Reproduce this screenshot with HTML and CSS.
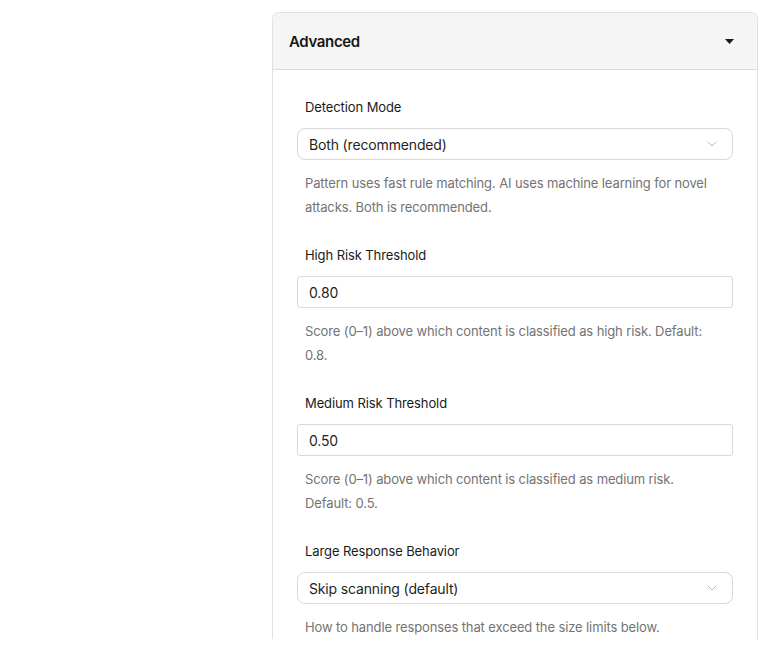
FILE: index.html
```html
<!DOCTYPE html>
<html>
<head>
<meta charset="utf-8">
<link rel="stylesheet" href="styles.css">
</head>
<body>
<div class="page">
  <section class="card">
    <header class="card-header">
      <span class="card-title">Advanced</span>
      <svg class="caret" width="9" height="5" viewBox="0 0 9 5"><path d="M0 0 H9 L4.5 5 Z" fill="#1a1a1a"/></svg>
    </header>
    <div class="card-body">
      <div class="field">
        <div class="label">Detection Mode</div>
        <div class="select">
          <span>Both (recommended)</span>
          <svg class="chev" width="10" height="6" viewBox="0 0 10 6"><path d="M0.5 0.5 L5 5 L9.5 0.5" fill="none" stroke="#b8b8b8" stroke-width="1"/></svg>
        </div>
        <p class="help">Pattern uses fast rule matching. AI uses machine learning for novel attacks. Both is recommended.</p>
      </div>
      <div class="field">
        <div class="label">High Risk Threshold</div>
        <div class="input">0.80</div>
        <p class="help">Score (0–1) above which content is classified as high risk. Default: 0.8.</p>
      </div>
      <div class="field">
        <div class="label">Medium Risk Threshold</div>
        <div class="input">0.50</div>
        <p class="help">Score (0–1) above which content is classified as medium risk. Default: 0.5.</p>
      </div>
      <div class="field">
        <div class="label">Large Response Behavior</div>
        <div class="select">
          <span>Skip scanning (default)</span>
          <svg class="chev" width="10" height="6" viewBox="0 0 10 6"><path d="M0.5 0.5 L5 5 L9.5 0.5" fill="none" stroke="#b8b8b8" stroke-width="1"/></svg>
        </div>
        <p class="help">How to handle responses that exceed the size limits below.</p>
      </div>
    </div>
  </section>
</div>
</body>
</html>
```

FILE: styles.css
```css
html, body {
  margin: 0;
  padding: 0;
  background: #ffffff;
  font-family: Inter, "Noto Sans", "Liberation Sans", sans-serif;
  color: #1f1f1f;
}

.page {
  padding: 12px 0 0 272px;
  height: 637px;
  overflow: hidden;
}

.card {
  width: 486px;
  box-sizing: border-box;
  border: 1px solid #e1e1e1;
  border-bottom: none;
  border-radius: 7px 7px 0 0;
  background: #fff;
}

.card-header {
  height: 56px;
  background: #f5f5f5;
  border-bottom: 1px solid #dcdcdc;
  border-radius: 7px 7px 0 0;
  display: flex;
  align-items: center;
  justify-content: space-between;
  padding: 0 23px 0 16px;
}

.card-title {
  font-size: 15px;
  font-weight: 600;
  color: #161616;
  letter-spacing: -0.35px;
}

.caret {
  display: block;
}

.card-body {
  padding: 27px 24px 0 24px;
  display: flex;
  flex-direction: column;
  gap: 26px;
}

.field {
  display: flex;
  flex-direction: column;
}

.label {
  font-size: 13px;
  line-height: 20px;
  font-weight: 400;
  color: #1a1a1a;
  padding-left: 8px;
  margin-bottom: 11px;
  letter-spacing: -0.1px;
}

.select, .input {
  height: 32px;
  box-sizing: border-box;
  border: 1px solid #d9d9d9;
  background: #fff;
  display: flex;
  align-items: center;
  justify-content: space-between;
  padding: 0 15px 0 11px;
  font-size: 14px;
  color: #1f1f1f;
  letter-spacing: -0.15px;
}

.select {
  border-radius: 8px;
}

.input {
  border-radius: 3px;
}

.chev {
  display: block;
}

.help {
  margin: 11px 0 0 0;
  padding: 0 10px 0 8px;
  font-size: 13px;
  line-height: 24px;
  color: #737373;
  letter-spacing: -0.12px;
}
```
